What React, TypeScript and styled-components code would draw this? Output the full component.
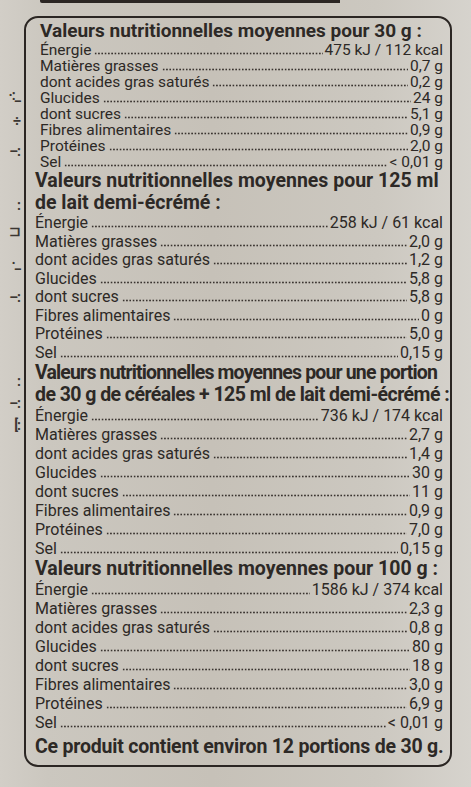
import React from "react";
import styled, { createGlobalStyle } from "styled-components";

const GlobalStyle = createGlobalStyle`
  html, body { margin: 0; padding: 0; }
  body {
    background: #cfcbc3;
    font-family: Roboto, "Noto Sans", sans-serif;
    color: #2d2926;
  }
`;

const Page = styled.div`
  width: 471px;
  height: 787px;
  box-sizing: border-box;
  padding: 0 19px 0 0;
  display: flex;
  flex-direction: column;
  background: linear-gradient(90deg, #d2cec7 0%, #cbc7bf 10%, #c6c1b8 45%, #ccc8c0 80%, #d6d3cd 100%);
  overflow: hidden;
`;

const TopEdge = styled.div`
  margin-left: 40px;
  width: 300px;
  height: 2.5px;
  background: #2b2623;
  border-radius: 0 0 0 2px;
`;

const Body = styled.div`
  margin-top: 13.5px;
  display: flex;
  align-items: flex-start;
`;

const SideStrip = styled.div`
  width: 24px;
  flex: 0 0 24px;
  display: flex;
  flex-direction: column;
  align-items: flex-end;
  padding-top: 72px;
  color: #3b3632;
  font-size: 14px;
  line-height: 1;
  overflow: hidden;
`;

const Frag = styled.span<{ $gap: number }>`
  margin-top: ${(p) => p.$gap}px;
  padding-right: 4px;
  letter-spacing: -1px;
  font-weight: 700;
`;

const Card = styled.div`
  flex: 1;
  min-width: 0;
  border: 2.5px solid #2b2623;
  border-radius: 14px;
  padding: 2px 7px 6px 9px;
  display: flex;
  flex-direction: column;
`;

const Section = styled.section<{ $indent?: number }>`
  display: flex;
  flex-direction: column;
  padding-left: ${(p) => p.$indent ?? 0}px;
`;

const Heading = styled.div<{ $size: number; $track: number }>`
  font-weight: 700;
  font-size: ${(p) => p.$size}px;
  letter-spacing: ${(p) => p.$track}px;
  line-height: 22px;
  white-space: nowrap;
`;

const Row = styled.div<{ $h: number; $size: number }>`
  display: flex;
  align-items: baseline;
  font-size: ${(p) => p.$size}px;
  line-height: ${(p) => p.$h}px;
  height: ${(p) => p.$h}px;
  white-space: nowrap;
`;

const Label = styled.span``;

const Leader = styled.span`
  flex: 1;
  height: 3px;
  margin: 0 2px 0 3px;
  background-image: radial-gradient(circle at center, #3a3430 0.8px, transparent 1.2px);
  background-size: 3.3px 3px;
  background-repeat: repeat-x;
`;

const Value = styled.span``;

const Footer = styled.div`
  margin-top: 3px;
  font-weight: 700;
  font-size: 19.5px;
  letter-spacing: -0.2px;
  line-height: 24px;
  white-space: nowrap;
`;

type Item = [string, string];
type Line = [string, number];

type SectionData = {
  heading: Line[];
  headSize: number;
  rowH: number;
  rowSize: number;
  indent?: number;
  rows: Item[];
};

const sections: SectionData[] = [
  {
    heading: [["Valeurs nutritionnelles moyennes pour 30 g :", 0]],
    headSize: 19,
    rowH: 16,
    rowSize: 15.5,
    indent: 5,
    rows: [
      ["Énergie", "475 kJ / 112 kcal"],
      ["Matières grasses", "0,7 g"],
      ["dont acides gras saturés", "0,2 g"],
      ["Glucides", "24 g"],
      ["dont sucres", "5,1 g"],
      ["Fibres alimentaires", "0,9 g"],
      ["Protéines", "2,0 g"],
      ["Sel", "< 0,01 g"],
    ],
  },
  {
    heading: [
      ["Valeurs nutritionnelles moyennes pour 125 ml", 0],
      ["de lait demi-écrémé :", 0],
    ],
    headSize: 19.5,
    rowH: 18.5,
    rowSize: 16,
    rows: [
      ["Énergie", "258 kJ / 61 kcal"],
      ["Matières grasses", "2,0 g"],
      ["dont acides gras saturés", "1,2 g"],
      ["Glucides", "5,8 g"],
      ["dont sucres", "5,8 g"],
      ["Fibres alimentaires", "0 g"],
      ["Protéines", "5,0 g"],
      ["Sel", "0,15 g"],
    ],
  },
  {
    heading: [
      ["Valeurs nutritionnelles moyennes pour une portion", -0.85],
      ["de 30 g de céréales + 125 ml de lait demi-écrémé :", -0.55],
    ],
    headSize: 19.5,
    rowH: 19,
    rowSize: 16,
    rows: [
      ["Énergie", "736 kJ / 174 kcal"],
      ["Matières grasses", "2,7 g"],
      ["dont acides gras saturés", "1,4 g"],
      ["Glucides", "30 g"],
      ["dont sucres", "11 g"],
      ["Fibres alimentaires", "0,9 g"],
      ["Protéines", "7,0 g"],
      ["Sel", "0,15 g"],
    ],
  },
  {
    heading: [["Valeurs nutritionnelles moyennes pour 100 g :", 0]],
    headSize: 19.5,
    rowH: 19,
    rowSize: 16,
    rows: [
      ["Énergie", "1586 kJ / 374 kcal"],
      ["Matières grasses", "2,3 g"],
      ["dont acides gras saturés", "0,8 g"],
      ["Glucides", "80 g"],
      ["dont sucres", "18 g"],
      ["Fibres alimentaires", "3,0 g"],
      ["Protéines", "6,9 g"],
      ["Sel", "< 0,01 g"],
    ],
  },
];

const fragments: [string, number][] = [
  ["·:_", 0],
  ["÷", 12],
  ["–:", 16],
  [":", 40],
  ["⊐", 12],
  ["·_", 18],
  ["–:", 20],
  [":", 70],
  ["–:", 8],
  ["[:", 8],
];

export default function App() {
  return (
    <>
      <GlobalStyle />
      <Page>
        <TopEdge />
        <Body>
          <SideStrip>
            {fragments.map(([t, g], i) => (
              <Frag key={i} $gap={g}>
                {t}
              </Frag>
            ))}
          </SideStrip>
          <Card>
            {sections.map((s, i) => (
              <Section key={i} $indent={s.indent}>
                {s.heading.map(([h, tr], j) => (
                  <Heading key={j} $size={s.headSize} $track={tr}>
                    {h}
                  </Heading>
                ))}
                {s.rows.map(([l, v], k) => (
                  <Row key={k} $h={s.rowH} $size={s.rowSize}>
                    <Label>{l}</Label>
                    <Leader />
                    <Value>{v}</Value>
                  </Row>
                ))}
              </Section>
            ))}
            <Footer>Ce produit contient environ 12 portions de 30 g.</Footer>
          </Card>
        </Body>
      </Page>
    </>
  );
}
